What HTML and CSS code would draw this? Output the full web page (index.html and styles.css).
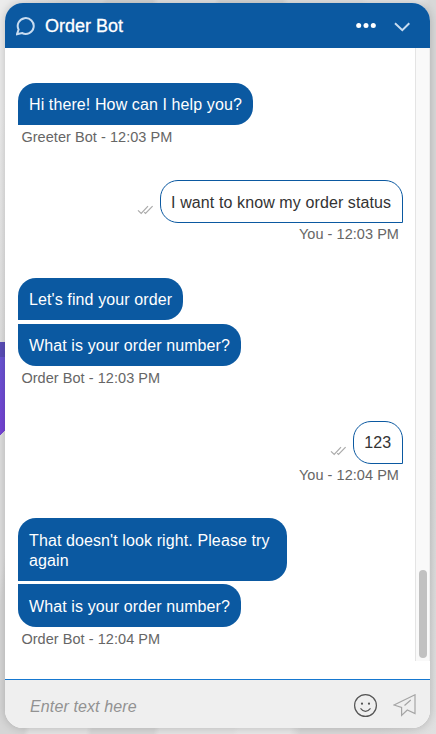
FILE: index.html
```html
<!DOCTYPE html>
<html lang="en">
<head>
<meta charset="utf-8">
<title>Order Bot</title>
<link rel="stylesheet" href="styles.css">
</head>
<body>
<main class="chat">
  <header class="header">
    <svg class="logo" width="20" height="20" viewBox="0 0 20 20"><path d="M1 18.2 2.6 13.6A8 7.9 0 1 1 6 17Z"/></svg>
    <h1 class="title">Order Bot</h1>
    <svg class="dots" width="20" height="6" viewBox="0 0 20 6"><circle cx="2.7" cy="2.5" r="2.5"/><circle cx="10" cy="2.5" r="2.5"/><circle cx="17.3" cy="2.5" r="2.5"/></svg>
    <svg class="chevron" width="16" height="10" viewBox="0 0 16 10"><path d="m1 1.2 7.3 7 7-7"/></svg>
  </header>
  <div class="body">
    <section class="messages">
      <div class="group">
        <div class="bubble">Hi there! How can I help you?</div>
        <div class="meta">Greeter Bot - 12:03 PM</div>
      </div>
      <div class="group mine">
        <div class="row">
          <svg class="ticks" width="17" height="10" viewBox="0 0 17 10"><path d="m1 5.3 3.2 3.2L11 1.2M7.2 7.2l1.3 1.3L15.6 1.2"/></svg>
          <div class="bubble">I want to know my order status</div>
        </div>
        <div class="meta">You - 12:03 PM</div>
      </div>
      <div class="group">
        <div class="bubble">Let's find your order</div>
        <div class="bubble last">What is your order number?</div>
        <div class="meta">Order Bot - 12:03 PM</div>
      </div>
      <div class="group mine">
        <div class="row">
          <svg class="ticks" width="17" height="10" viewBox="0 0 17 10"><path d="m1 5.3 3.2 3.2L11 1.2M7.2 7.2l1.3 1.3L15.6 1.2"/></svg>
          <div class="bubble">123</div>
        </div>
        <div class="meta">You - 12:04 PM</div>
      </div>
      <div class="group">
        <div class="bubble wide">That doesn't look right. Please try again</div>
        <div class="bubble last">What is your order number?</div>
        <div class="meta">Order Bot - 12:04 PM</div>
      </div>
    </section>
    <div class="track"><div class="thumb"></div></div>
  </div>
  <footer class="composer">
    <span class="placeholder">Enter text here</span>
    <svg class="smile" width="24" height="24" viewBox="0 0 24 24"><circle cx="11.5" cy="11.5" r="10.9"/><path d="M6.5 14.3q5 6.2 10 0"/><circle class="eye" cx="8" cy="9.7" r="1.1"/><circle class="eye" cx="15" cy="9.7" r="1.1"/></svg>
    <svg class="send" width="24" height="24" viewBox="0 0 24 24"><path d="M1 11 22 .8V19.5L14.3 16 8.6 21.4V13.5ZM11.5 11.5 17.8 6"/></svg>
  </footer>
</main>
</body>
</html>
```
FILE: styles.css
```css
* { box-sizing: border-box; }
body {
  margin: 0;
  height: 734px;
  padding: 3px 6px 6px 5px;
  overflow: hidden;
  font-family: "Liberation Sans", Arial, sans-serif;
  background:
    linear-gradient(#5a4db8, #5a4db8) 0 342px / 5px 15px no-repeat,
    linear-gradient(#6a55d4, #7544d6) 0 357px / 5px 74px no-repeat,
    linear-gradient(to bottom right, #7544d6 50%, transparent 51%) 0 431px / 5px 4px no-repeat,
    linear-gradient(100deg, #ececec 0 4%, #dedede 12% 18%, #d6d6d6 19% 27%, #e4e4e4 28% 38%, #d8d8d8 39% 50%, #e4e4e4 51% 64%, #e8e8e8 65% 74%, #d8d8d8 76% 90%, #e0e0e0);
}
.chat {
  display: flex;
  flex-direction: column;
  height: 725px;
  border-radius: 18px;
  overflow: hidden;
  background: #fff;
  box-shadow: 0 0 10px rgba(0, 0, 0, .2);
}
.header {
  display: flex;
  align-items: center;
  height: 45px;
  padding: 0 20px 0 11px;
  background: #0b59a1;
  color: #fff;
}
.header svg { fill: none; stroke: #c8dcf0; stroke-width: 2; }
.title {
  flex: 1;
  margin: 0 0 0 9px;
  font-size: 18px;
  font-weight: 400;
  line-height: 24px;
  -webkit-text-stroke: .3px #fff;
}
.header .dots { fill: #fff; stroke: none; }
.chevron { margin: 2px 0 0 18px; }
.body { display: flex; height: 613px; }
.messages { flex: 1; padding: 35px 12px 0 13px; }
.track {
  width: 15px;
  padding: 522px 3px 0;
  border-left: 1px solid #e4e4e4;
  border-right: 1px solid #eee;
  background: #f9f9f9;
}
.thumb { width: 8px; height: 88px; border-radius: 4px; background: #c1c1c1; }
.group {
  display: flex;
  flex-direction: column;
  align-items: flex-start;
  margin-bottom: 32.8px;
}
.mine { align-items: flex-end; }
.row { display: flex; align-items: flex-end; }
.bubble {
  padding: 12.3px 10.8px 10.2px 11px;
  border-radius: 18px 18px 18px 0;
  background: #0b59a1;
  color: #fff;
  font-size: 16px;
  line-height: 20px;
  letter-spacing: .105px;
}
.bubble.last { margin-top: 3.7px; border-radius: 0 18px 18px 18px; }
.wide { width: 269px; }
.mine .bubble {
  padding: 11.3px 10.8px 9.2px 9.8px;
  border: 1px solid #0b59a1;
  border-radius: 18px 18px 0 18px;
  background: #fff;
  color: #333;
}
.ticks { margin: 0 6px 8px 0; fill: none; stroke: #aaa; stroke-width: 1.2; }
.meta {
  height: 22px;
  padding: .7px 4px 0 3.4px;
  color: #666;
  font-size: 14.5px;
  line-height: 23.6px;
  letter-spacing: .05px;
  white-space: nowrap;
}
.composer {
  display: flex;
  align-items: center;
  height: 49px;
  margin-top: 18px;
  padding: 3px 13px 0 25px;
  border-top: 1px solid #1678d0;
  background: #efefef;
}
.placeholder {
  flex: 1;
  padding-top: 2px;
  color: #929292;
  font-size: 16px;
  font-style: italic;
  letter-spacing: .12px;
}
.composer svg { fill: none; stroke-width: 1.2; }
.smile { stroke: #555; }
.smile .eye { fill: #555; stroke: none; }
.send { margin-left: 15px; stroke: #a5a5a5; }
```
